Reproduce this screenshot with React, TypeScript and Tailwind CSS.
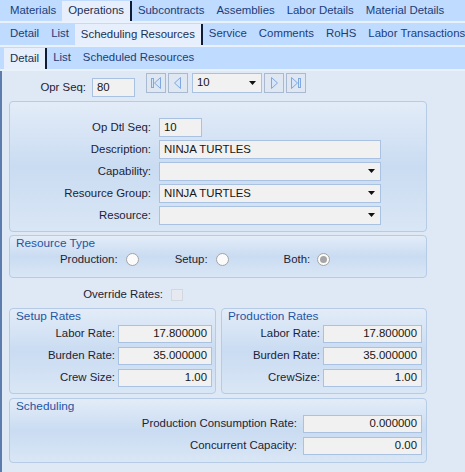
import React from 'react';

const FONT = { fontFamily: '"Liberation Sans", Arial, sans-serif' };

const ROW1 = ['Materials', 'Operations', 'Subcontracts', 'Assemblies', 'Labor Details', 'Material Details'];
const ROW2 = ['Detail', 'List', 'Scheduling Resources', 'Service', 'Comments', 'RoHS', 'Labor Transactions'];
const ROW3 = ['Detail', 'List', 'Scheduled Resources'];

function TabRow({ tabs, active, h }: { tabs: string[]; active: string; h: string }) {
  return (
    <div className={`flex items-stretch bg-[#bfdbff] pl-[4px] border-b-2 border-[#e9f1fb] whitespace-nowrap overflow-hidden ${h}`}>
      {tabs.map((t) => (
        <div
          key={t}
          className={`flex items-center px-[6px] text-[11.4px] ${
            t === active
              ? 'bg-[#e6effb] border-r-2 border-[#0d1d36] text-[#1a2f55] mt-[1px]'
              : 'text-[#1b3d78]'
          }`}
        >
          {t}
        </div>
      ))}
    </div>
  );
}

function Field({ value, w, right, combo }: { value?: string; w: string; right?: boolean; combo?: boolean }) {
  return (
    <div
      className={`flex items-center h-full bg-[#f1f1f1] border border-[#aac2e2] text-[11.4px] text-[#161616] ${w} ${
        right ? 'justify-end pr-[4px]' : 'pl-[4px]'
      }`}
    >
      {!combo && value}
      {combo && (
        <>
          <span className="flex-1">{value}</span>
          <svg width="8" height="5" viewBox="0 0 8 5" className="mr-[4px]">
            <path d="M0 0h7L3.5 4z" fill="#111" />
          </svg>
        </>
      )}
    </div>
  );
}

function NavBtn({ kind }: { kind: 'first' | 'prev' | 'next' | 'last' }) {
  const stroke = '#7ea8de';
  const fill = '#d6e5f7';
  return (
    <div className="w-[20px] h-[20px] border border-[#a9b9cf] bg-[#dfe7f2] flex items-center justify-center">
      <svg width="14" height="14" viewBox="0 0 14 14">
        {kind === 'first' && (
          <>
            <rect x="2.5" y="2.5" width="2" height="9" fill={fill} stroke={stroke} />
            <path d="M11.5 1.5v11L5.5 7z" fill={fill} stroke={stroke} />
          </>
        )}
        {kind === 'prev' && <path d="M9.5 1.5v11L3.5 7z" fill={fill} stroke={stroke} />}
        {kind === 'next' && <path d="M4.5 1.5v11L10.5 7z" fill={fill} stroke={stroke} />}
        {kind === 'last' && (
          <>
            <path d="M2.5 1.5v11L8.5 7z" fill={fill} stroke={stroke} />
            <rect x="9.5" y="2.5" width="2" height="9" fill={fill} stroke={stroke} />
          </>
        )}
      </svg>
    </div>
  );
}

function Group({ children, className }: { children: React.ReactNode; className: string }) {
  return (
    <div
      className={`rounded-[4px] border border-[#b6cbe6] bg-linear-to-b from-[#e3ecf8] via-[#cadcf2] to-[#d9e6f5] ${className}`}
    >
      {children}
    </div>
  );
}

function GroupTitle({ children }: { children: React.ReactNode }) {
  return <div className="h-[16px] leading-[15px] pl-[6px] text-[11.8px] text-[#2455a4]">{children}</div>;
}

function Radio({ checked }: { checked?: boolean }) {
  return (
    <div className="w-[13px] h-[13px] rounded-full border border-[#a3a3a3] bg-[#fbfbfb] flex items-center justify-center">
      {checked && <div className="w-[7px] h-[7px] rounded-full bg-[#a6a6a6]" />}
    </div>
  );
}

export default function App() {
  const label = 'text-right text-[11.4px] text-[#1d2233]';
  return (
    <div className="w-[465px] h-[472px] overflow-hidden bg-[#dfe8f5]" style={FONT}>
      <TabRow tabs={ROW1} active="Operations" h="h-[23px]" />
      <TabRow tabs={ROW2} active="Scheduling Resources" h="h-[24px]" />
      <TabRow tabs={ROW3} active="Detail" h="h-[24px]" />

      <div className="border-l-2 border-[#5c7cae] h-[401px] pt-[2px]">
        {/* Opr Seq + navigator */}
        <div className="flex items-start">
          <div className={`${label} w-[84px] mt-[6px]`}>Opr Seq:</div>
          <div className="ml-[6px] mt-[5px] h-[19px]">
            <Field value="80" w="w-[43px]" />
          </div>
          <div className="ml-[11px] flex items-center gap-[2px]">
            <NavBtn kind="first" />
            <NavBtn kind="prev" />
          </div>
          <div className="ml-[4px] h-[20px]">
            <Field value="10" w="w-[70px]" combo />
          </div>
          <div className="ml-[2px] flex items-center gap-[2px]">
            <NavBtn kind="next" />
            <NavBtn kind="last" />
          </div>
        </div>

        <div className="pl-[7px]">
          {/* Main detail group */}
          <Group className="mt-[4px] w-[418px] h-[131px] pt-[16px] flex flex-col gap-[3px]">
            {[
              { l: 'Op Dtl Seq:', v: '10', w: 'w-[43px]' },
              { l: 'Description:', v: 'NINJA TURTLES', w: 'w-[222px]' },
              { l: 'Capability:', v: '', w: 'w-[222px]', c: true },
              { l: 'Resource Group:', v: 'NINJA TURTLES', w: 'w-[222px]', c: true },
              { l: 'Resource:', v: '', w: 'w-[222px]', c: true },
            ].map((r) => (
              <div key={r.l} className="flex items-center h-[19px]">
                <div className={`${label} w-[141px]`}>{r.l}</div>
                <div className="ml-[8px] h-[19px]">
                  <Field value={r.v} w={r.w} combo={r.c} />
                </div>
              </div>
            ))}
          </Group>

          {/* Resource type */}
          <Group className="mt-[3px] w-[418px] h-[43px]">
            <GroupTitle>Resource Type</GroupTitle>
            <div className="flex items-center -mt-[1px] text-[11.4px] text-[#1d2233]">
              <span className="ml-[50px]">Production:</span>
              <div className="ml-[8px]"><Radio /></div>
              <span className="ml-[36px]">Setup:</span>
              <div className="ml-[8px]"><Radio /></div>
              <span className="ml-[55px]">Both:</span>
              <div className="ml-[7px]"><Radio checked /></div>
            </div>
          </Group>
        </div>

        {/* Override rates */}
        <div className="flex items-center mt-[10px] h-[14px]">
          <div className={`${label} w-[161px]`}>Override Rates:</div>
          <div className="ml-[8px] w-[12px] h-[12px] border border-[#d2d8e0] bg-[#e6eaf0]" />
        </div>

        <div className="pl-[7px]">
          <div className="flex gap-[5px] mt-[6px]">
            <Group className="w-[207px] h-[86px]">
              <GroupTitle>Setup Rates</GroupTitle>
              <div className="flex flex-col gap-[4px]">
                {[
                  ['Labor Rate:', '17.800000'],
                  ['Burden Rate:', '35.000000'],
                  ['Crew Size:', '1.00'],
                ].map(([l, v]) => (
                  <div key={l} className="flex items-center h-[18px]">
                    <div className={`${label} w-[105px]`}>{l}</div>
                    <div className="ml-[3px] h-[18px]">
                      <Field value={v} w="w-[94px]" right />
                    </div>
                  </div>
                ))}
              </div>
            </Group>
            <Group className="w-[206px] h-[86px]">
              <GroupTitle>Production Rates</GroupTitle>
              <div className="flex flex-col gap-[4px]">
                {[
                  ['Labor Rate:', '17.800000'],
                  ['Burden Rate:', '35.000000'],
                  ['CrewSize:', '1.00'],
                ].map(([l, v]) => (
                  <div key={l} className="flex items-center h-[18px]">
                    <div className={`${label} w-[98px]`}>{l}</div>
                    <div className="ml-[3px] h-[18px]">
                      <Field value={v} w="w-[99px]" right />
                    </div>
                  </div>
                ))}
              </div>
            </Group>
          </div>

          {/* Scheduling */}
          <Group className="mt-[4px] w-[418px] h-[65px]">
            <GroupTitle>Scheduling</GroupTitle>
            <div className="flex flex-col gap-[4px]">
              {[
                ['Production Consumption Rate:', '0.000000'],
                ['Concurrent Capacity:', '0.00'],
              ].map(([l, v]) => (
                <div key={l} className="flex items-center h-[18px]">
                  <div className={`${label} w-[287px]`}>{l}</div>
                  <div className="ml-[6px] h-[18px]">
                    <Field value={v} w="w-[119px]" right />
                  </div>
                </div>
              ))}
            </div>
          </Group>
        </div>
      </div>
    </div>
  );
}
